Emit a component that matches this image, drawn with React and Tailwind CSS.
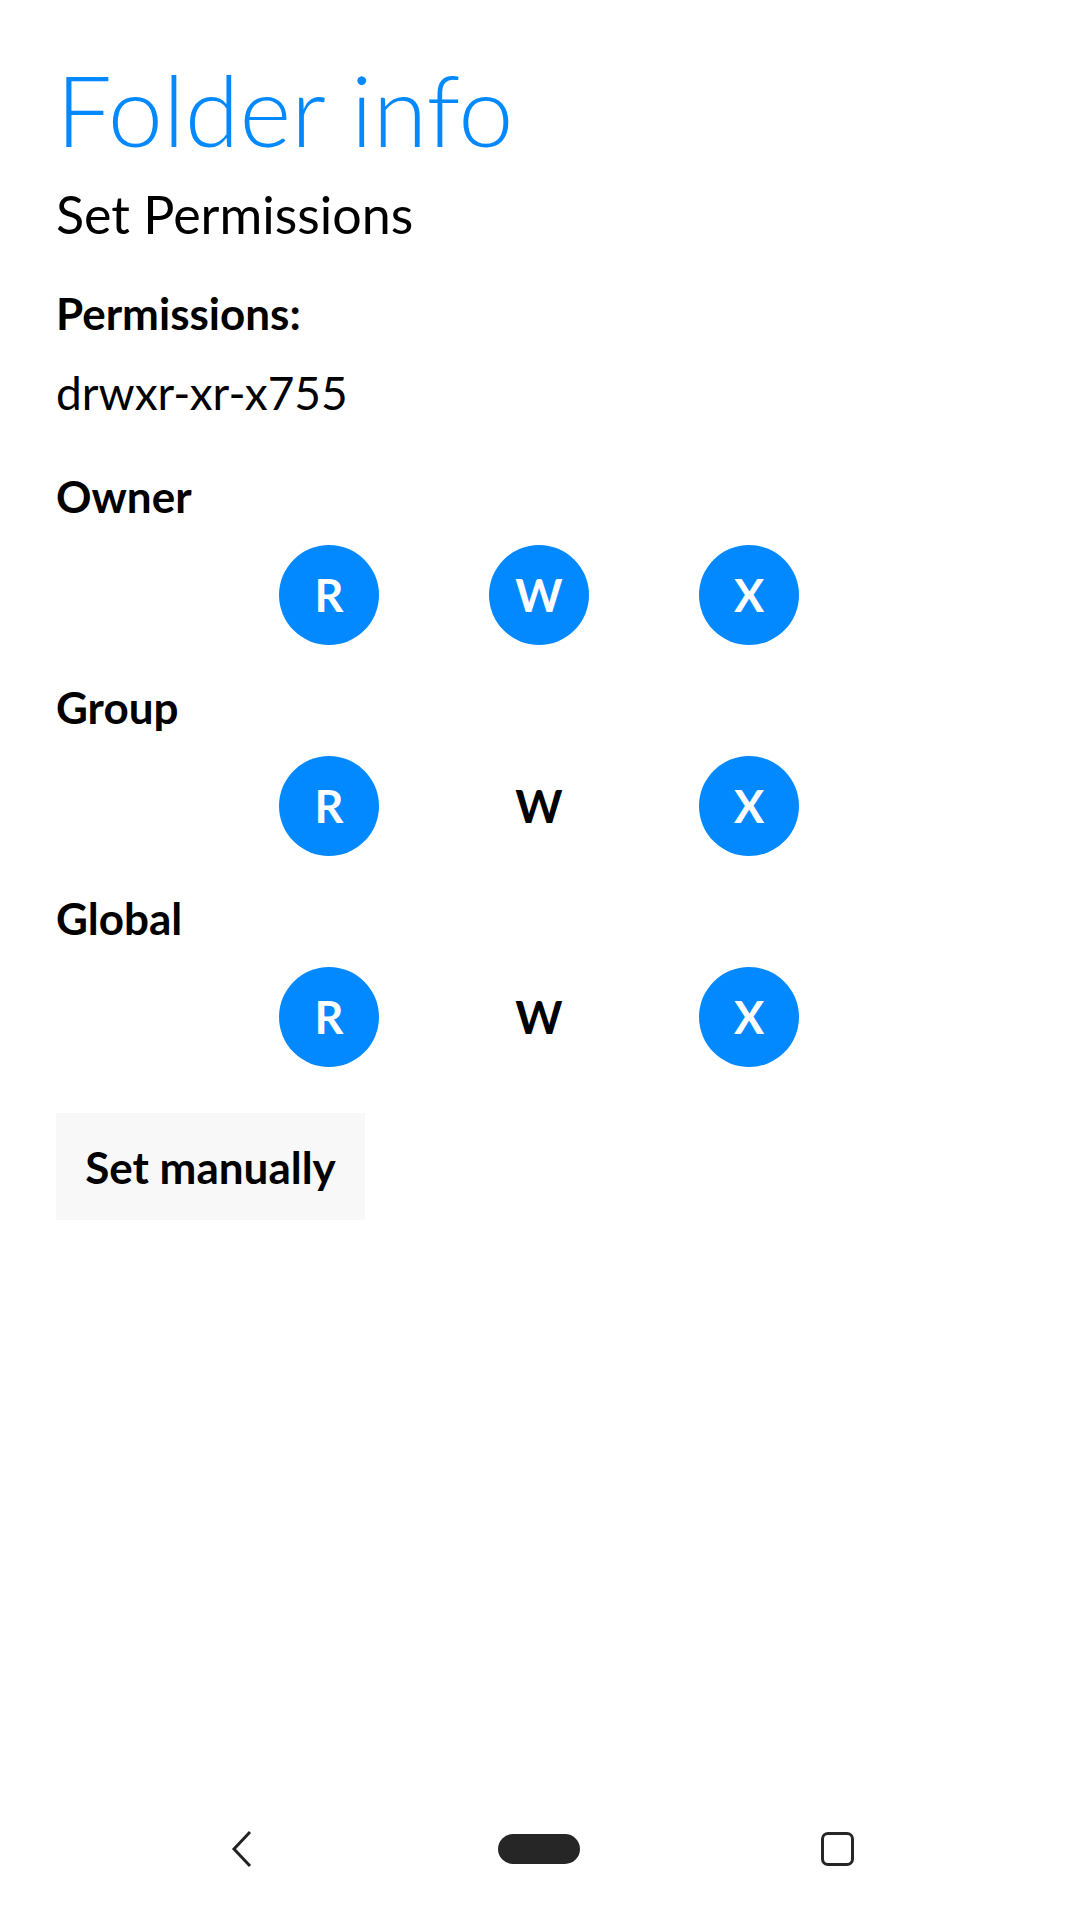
const rows = [
  { label: 'Owner', r: true, w: true, x: true },
  { label: 'Group', r: true, w: false, x: true },
  { label: 'Global', r: true, w: false, x: true },
];

function PermBit({ letter, on }) {
  return (
    <div
      className={
        on
          ? 'flex h-[100px] w-[100px] items-center justify-center rounded-full bg-[#0389ff] text-[45px] leading-none font-bold text-white'
          : 'flex h-[100px] w-[100px] items-center justify-center text-[45px] leading-none font-bold text-black'
      }
    >
      {letter}
    </div>
  );
}

export default function App() {
  return (
    <div className="flex min-h-[1920px] flex-col bg-white font-['Lato','Open_Sans',sans-serif] text-black">
      <div className="flex flex-col pl-[56px] pt-[60px]">
        {/* Header */}
        <h1 className="text-[99px] leading-[98px] font-light text-[#0389ff]">Folder info</h1>
        <h2 className="mt-[29px] text-[52px] leading-[55px] font-normal">Set Permissions</h2>

        <p className="mt-[49px] text-[44px] leading-[45px] font-bold">Permissions:</p>
        <p className="mt-[34px] text-[46px] leading-[45px]">drwxr-xr-x755</p>

        {/* Owner / Group / Global */}
        <div className="mt-[59px] flex flex-col gap-[40px]">
          {rows.map((row) => (
            <div key={row.label} className="flex flex-col gap-[26px]">
              <p className="text-[44px] leading-[45px] font-bold">{row.label}</p>
              <div className="ml-[223px] flex gap-[110px]">
                <PermBit letter="R" on={row.r} />
                <PermBit letter="W" on={row.w} />
                <PermBit letter="X" on={row.x} />
              </div>
            </div>
          ))}
        </div>

        <button className="mt-[46px] flex h-[107px] w-[309px] items-center justify-center bg-[#f8f8f8] text-[44px] font-bold">
          Set manually
        </button>
      </div>

      {/* Navigation bar */}
      <div className="mt-auto flex h-[142px] items-center pl-[191px] gap-[198px]">
        <div className="flex w-[100px] justify-center">
          <svg width="24" height="38" viewBox="0 0 24 38" fill="none">
            <path d="M21 2 L5 19 L21 36" stroke="#222" strokeWidth="3" />
          </svg>
        </div>
        <div className="flex w-[100px] justify-center">
          <div className="h-[30px] w-[82px] rounded-full bg-[#262626]" />
        </div>
        <div className="flex w-[100px] justify-center">
          <div className="h-[34px] w-[33px] rounded-[7px] border-[3px] border-[#262626]" />
        </div>
      </div>
    </div>
  );
}
